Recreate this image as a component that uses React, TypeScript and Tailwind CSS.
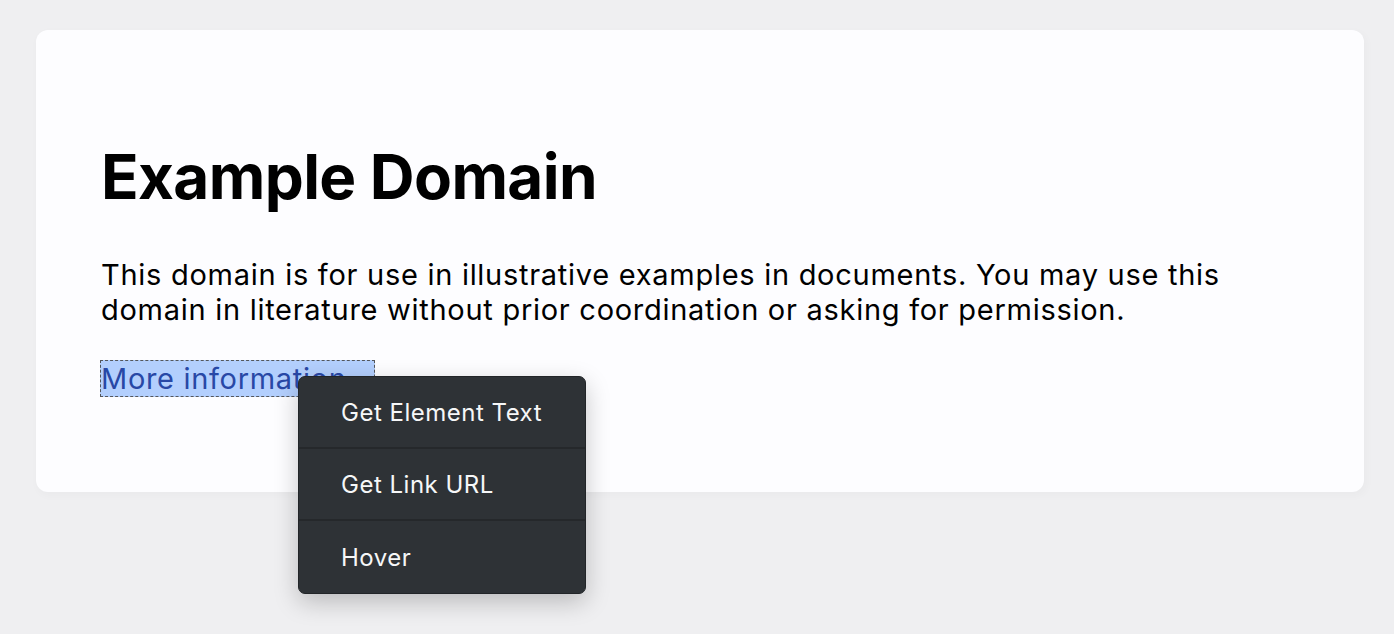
const items = ["Get Element Text", "Get Link URL", "Hover"];

export default function App() {
  return (
    <div className="relative min-h-screen bg-[#efeff1] pt-[30px] pl-[36px] pr-[30px] pb-10 font-['Inter',sans-serif]">
      {/* card */}
      <div className="rounded-[12px] bg-[#fdfdff] px-[64px] pt-[109px] pb-[96px] shadow-[2px_3px_7px_2px_rgba(0,0,0,0.02)]">
        <h1 className="pl-px text-[62px] font-bold leading-[76px] tracking-[-0.6px] text-black">Example Domain</h1>
        <p className="mt-[42px] pl-px text-[29px] leading-[35px] tracking-[0.72px] text-black">
          This domain is for use in illustrative examples in documents. You may use this domain in literature without prior coordination or asking for permission.
        </p>
        <p className="mt-[34px] text-[29px] leading-[35px] tracking-[0.68px]">
          <a className="border border-dashed border-[#54575c] bg-[#b3cffd] text-[#2848a6]">More information...</a>
        </p>
      </div>

      {/* context menu */}
      <div className="absolute left-[298px] top-[376px] w-[288px] overflow-hidden rounded-[7px] border border-[#222528] bg-[#2e3236] shadow-[0_8px_24px_rgba(0,0,0,0.22)]">
        {items.map((label, i) => (
          <div
            key={label}
            className={`flex h-[72px] items-center pl-[42px] pt-[2px] text-[24px] tracking-[0.5px] text-[#f6f7f8] ${i < items.length - 1 ? "border-b-2 border-[#25282b]" : ""}`}
          >
            {label}
          </div>
        ))}
      </div>
    </div>
  );
}
